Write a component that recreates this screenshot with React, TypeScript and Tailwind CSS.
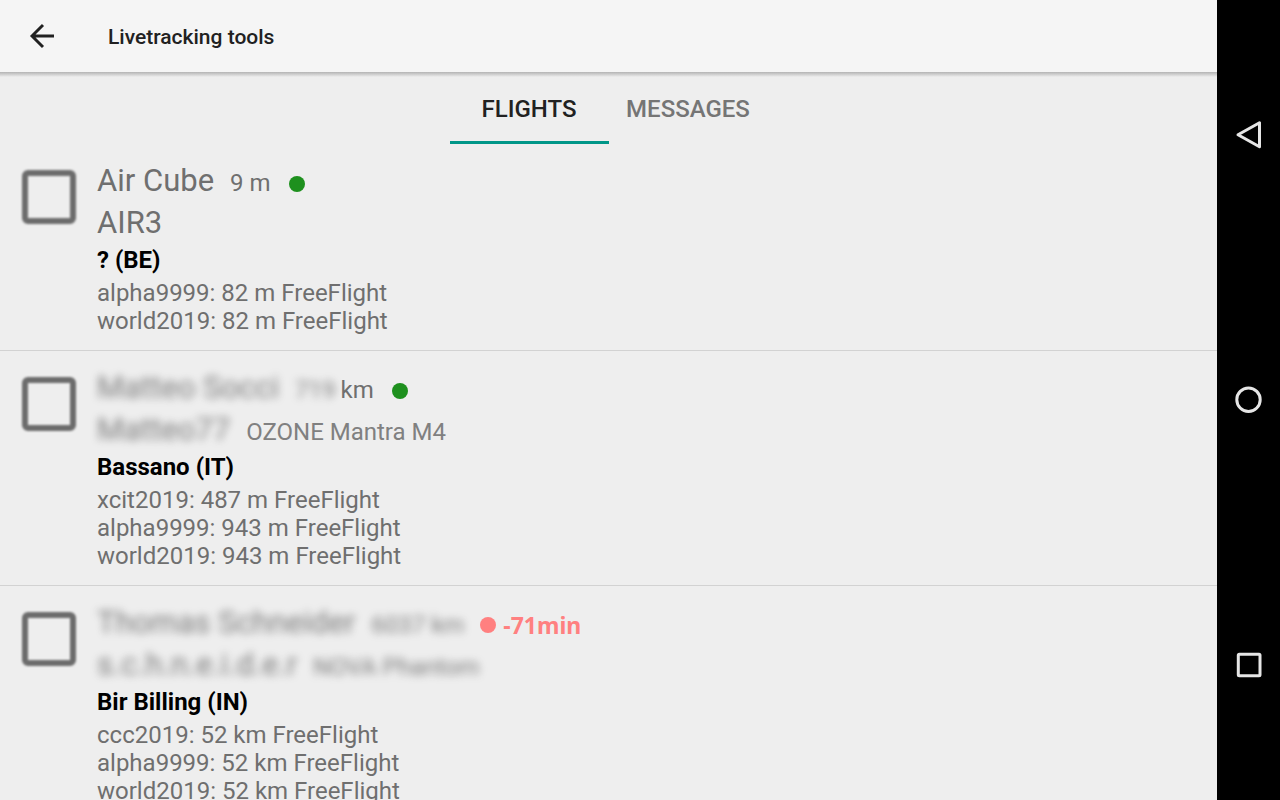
import { useState } from "react";

interface Score {
    league: string;
    distance: string;
}

interface Flight {
    id: string;
    pilot: string;
    away: string;
    awayUnit?: string;
    nick: string;
    glider?: string;
    place: string;
    scores: Score[];
    lateMin?: number;
    // Which parts are masked for privacy
    hidePilot?: boolean;
    hideAway?: boolean;
    hideGlider?: boolean;
}

const FLIGHTS: Flight[] = [
    {
        id: "air3",
        pilot: "Air Cube",
        away: "9 m",
        nick: "AIR3",
        place: "? (BE)",
        scores: [
            { league: "alpha9999", distance: "82 m" },
            { league: "world2019", distance: "82 m" },
        ],
    },
    {
        id: "bassano",
        pilot: "Matteo Socci",
        away: "719",
        awayUnit: "km",
        nick: "Matteo77",
        glider: "OZONE Mantra M4",
        place: "Bassano (IT)",
        scores: [
            { league: "xcit2019", distance: "487 m" },
            { league: "alpha9999", distance: "943 m" },
            { league: "world2019", distance: "943 m" },
        ],
        hidePilot: true,
        hideAway: true,
    },
    {
        id: "bir",
        pilot: "Thomas Schneider",
        away: "6037 km",
        nick: "s.c.h.n.e.i.d.e.r",
        glider: "NOVA Phantom",
        place: "Bir Billing (IN)",
        scores: [
            { league: "ccc2019", distance: "52 km" },
            { league: "alpha9999", distance: "52 km" },
            { league: "world2019", distance: "52 km" },
        ],
        lateMin: 71,
        hidePilot: true,
        hideAway: true,
        hideGlider: true,
    },
];

const TABS = ["FLIGHTS", "MESSAGES"];

const MASK = "blur-[4px] opacity-90";

function FlightRow({ flight }: { flight: Flight }) {
    const { id, pilot, away, awayUnit, nick, glider, place, scores, lateMin } = flight;

    return (
        <li className="flex items-start gap-[21px] border-b border-[#d2d2d2] pt-4 pr-4 pb-[15px] pl-[22px]">
            <input
                id={`flight-${id}`}
                type="checkbox"
                aria-label={`${pilot} ${place}`}
                className="mt-[10px] h-[54px] w-[54px] shrink-0 appearance-none rounded-md border-[6px] border-[#6c6c6c] blur-[1px] checked:bg-[#009688]"
            />
            <label htmlFor={`flight-${id}`} className="min-w-0 flex-1 whitespace-nowrap text-2xl leading-7 text-[#6f6f6f]">
                <div className="flex h-[42px] items-baseline gap-4 leading-[42px]">
                    <span className={`text-[31px] leading-[42px] ${flight.hidePilot ? MASK : ""}`}>{pilot}</span>
                    <span className="flex gap-[5px]">
                        <span className={flight.hideAway ? MASK : ""}>{away}</span>
                        {awayUnit && <span>{awayUnit}</span>}
                    </span>
                    {lateMin ? (
                        <span className="flex items-center gap-[7px] font-['Noto_Sans',sans-serif] text-[23px] font-bold text-[#ff8080]">
                            <span className="h-4 w-4 rounded-full bg-[#ff8080]" />
                            -{lateMin}min
                        </span>
                    ) : (
                        <span className="ml-0.5 h-4 w-4 translate-y-px rounded-full bg-[#1e901e]" />
                    )}
                </div>
                <div className="flex h-[42px] items-baseline gap-4 leading-[42px]">
                    <span className={`text-[31px] leading-[42px] ${flight.hidePilot ? MASK : ""}`}>{nick}</span>
                    {glider && (
                        <span className={flight.hideGlider ? MASK : "text-[#808080]"}>{glider}</span>
                    )}
                </div>
                <p className="mt-0.5 font-bold text-black">{place}</p>
                <div className="mt-[5px]">
                    {scores.map((s) => (
                        <p key={s.league}>
                            {s.league}: {s.distance} FreeFlight
                        </p>
                    ))}
                </div>
            </label>
        </li>
    );
}

function NavBar() {
    return (
        <nav aria-label="System" className="flex w-[63px] shrink-0 flex-col items-center justify-between bg-black py-[119px] text-[#e6e6e6]">
            <button aria-label="Back" className="h-8 w-8">
                <svg viewBox="0 0 32 32" fill="none" stroke="currentColor" strokeWidth="3" strokeLinejoin="round">
                    <path d="M5 15.7 26.5 3.7v24z" />
                </svg>
            </button>
            <button aria-label="Home" className="h-8 w-8">
                <svg viewBox="0 0 32 32" fill="none" stroke="currentColor" strokeWidth="3">
                    <circle cx="15.5" cy="15.7" r="11.7" />
                </svg>
            </button>
            <button aria-label="Recent apps" className="h-8 w-8">
                <svg viewBox="0 0 32 32" fill="none" stroke="currentColor" strokeWidth="3">
                    <rect x="5.3" y="5.3" width="21.7" height="21.4" rx="1" />
                </svg>
            </button>
        </nav>
    );
}

export default function App() {
    const [tab, setTab] = useState("FLIGHTS");

    return (
        <div className="flex h-screen overflow-hidden bg-[#eeeeee] font-[Roboto,sans-serif]">
            <div className="flex min-w-0 flex-1 flex-col">
                {/* Toolbar */}
                <header className="flex h-[72px] shrink-0 items-center gap-[48px] bg-[#f5f5f5] px-6">
                    <button aria-label="Back" className="h-9 w-9 text-[#212121]">
                        <svg viewBox="0 0 36 36" fill="none" stroke="currentColor" strokeWidth="2.9">
                            <path d="M30 18H8M19 7 8 18l11 11" />
                        </svg>
                    </button>
                    <h1 className="pt-0.5 text-[21px] leading-7 font-medium text-[#212121]">Livetracking tools</h1>
                </header>
                <div className="h-[5px] shrink-0 bg-linear-to-b from-[#b4b4b4] to-[#eeeeee]" />

                {/* Tabs */}
                <div role="tablist" className="flex h-[67px] shrink-0 justify-center">
                    {TABS.map((name) => (
                        <button
                            key={name}
                            role="tab"
                            aria-selected={tab === name}
                            onClick={() => setTab(name)}
                            className={`w-[159px] border-b-[3px] text-2xl font-medium ${tab === name
                                ? "border-[#009688] text-[#212121]"
                                : "border-transparent text-[#757575]"
                            }`}
                        >
                            {name}
                        </button>
                    ))}
                </div>

                {/* Flight list */}
                <ul className="min-h-0 flex-1 overflow-hidden">
                    {tab === "FLIGHTS" && FLIGHTS.map((f) => <FlightRow key={f.id} flight={f} />)}
                </ul>
            </div>
            <NavBar />
        </div>
    );
}
